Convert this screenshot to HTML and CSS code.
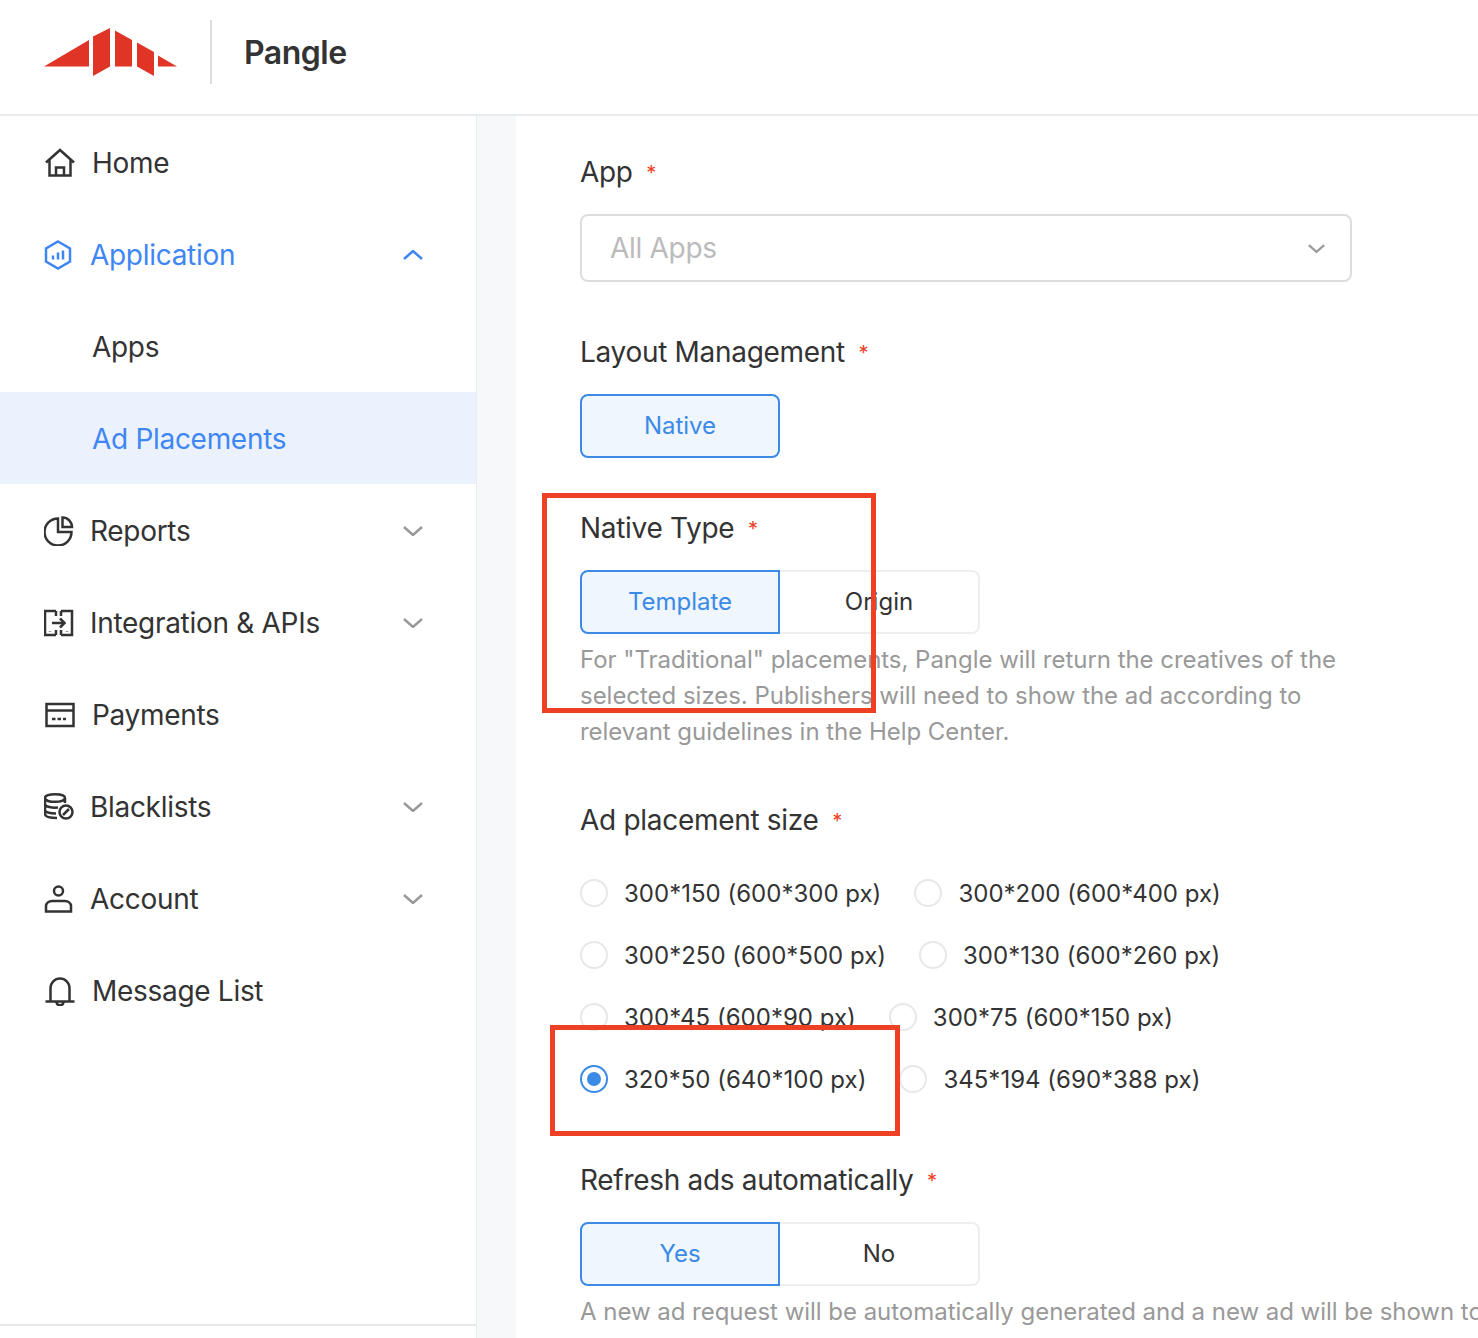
FILE: index.html
```html
<!DOCTYPE html>
<html lang="en">
<head>
    <meta charset="UTF-8">
    <meta name="viewport" content="width=device-width, initial-scale=1.0">
    <title>Pangle</title>
    <link rel="stylesheet" href="styles.css">
</head>
<body>
    <header class="topbar">
        <svg class="logo" width="134" height="48" viewBox="44 28 134 48">
            <polygon points="44,66.5 89,40 89,66.5"/>
            <polygon points="93,36.5 110,28 110,66.5 93,76"/>
            <polygon points="115,30.5 132,40 132,66.5 115,66.5"/>
            <polygon points="137,42.5 154,52 154,76 137,66.5"/>
            <polygon points="158,55.5 177,66.5 158,66.5"/>
        </svg>
        <div class="topbar-divider"></div>
        <div class="brand">Pangle</div>
    </header>

    <div class="layout">
        <nav class="sidebar">
            <a class="nav-item">
                <svg class="nav-icon" viewBox="0 0 30 30"><path d="M1 14.500 15 2l14 12.500M4.500 11.500V27.500h21V11.500M11 27.500V19.500h8v8"/></svg>
                <span>Home</span>
            </a>
            <a class="nav-item group open">
                <svg class="nav-icon" viewBox="0 0 30 30"><path d="M14 1.500 26 8.500v13l-12 7-12-7v-13zM9 15.500v4M14 12.500v7M19 10.500v9"/></svg>
                <span>Application</span>
                <svg class="chevron" viewBox="0 0 20 10"><path d="M1 9 10 1l9 8"/></svg>
            </a>
            <a class="nav-item">
                <span class="nav-spacer"></span>
                <span>Apps</span>
            </a>
            <a class="nav-item active">
                <span class="nav-spacer"></span>
                <span>Ad Placements</span>
            </a>
            <a class="nav-item group">
                <svg class="nav-icon" viewBox="1 0 30 30"><path d="M15 2.500A13.500 13.500 0 1 0 28.500 16H15zM19.500 1.500A9.500 9.500 0 0 1 29 11H19.500z"/></svg>
                <span>Reports</span>
                <svg class="chevron" viewBox="0 0 20 10"><path d="M1 1l9 8 9-8"/></svg>
            </a>
            <a class="nav-item group">
                <svg class="nav-icon" viewBox="1 0 30 30"><path d="M13 3H2v24h11M18 3h11v24H18M13 3v5M18 3v5M13 22v5M18 22v5M9 15h12M17 10.500l4.500 4.500-4.500 4.500M7 23v.5M24 23v.5"/></svg>
                <span>Integration &amp; APIs</span>
                <svg class="chevron" viewBox="0 0 20 10"><path d="M1 1l9 8 9-8"/></svg>
            </a>
            <a class="nav-item">
                <svg class="nav-icon" viewBox="0 0 30 30"><path d="M1.500 4h27v22h-27zM1.500 10.500h27M7 19h3.500M12.500 19h3.500M18 19h3"/></svg>
                <span>Payments</span>
            </a>
            <a class="nav-item group">
                <svg class="nav-icon" viewBox="1 0 30 30"><path d="M2 6c0-5 20-5 20 0s-20 5-20 0zM2 6v16c0 3 6 4 12 4M22 6v5M2 12c0 3 7 4 13 3.500M2 18c0 2.500 6 3.500 11 3.500"/><circle cx="23" cy="20" r="6.500"/><path d="M20 23l6-6"/></svg>
                <span>Blacklists</span>
                <svg class="chevron" viewBox="0 0 20 10"><path d="M1 1l9 8 9-8"/></svg>
            </a>
            <a class="nav-item group">
                <svg class="nav-icon" viewBox="0 0 30 30"><circle cx="14.500" cy="7" r="4.500"/><path d="M2 27.500V22c0-3 3-5 6-5h13c3 0 6 2 6 5v5.500z"/></svg>
                <span>Account</span>
                <svg class="chevron" viewBox="0 0 20 10"><path d="M1 1l9 8 9-8"/></svg>
            </a>
            <a class="nav-item">
                <svg class="nav-icon" viewBox="0 0 30 30"><path d="M0.500 25.500h29M5.500 25.500V12a9.500 9.500 0 0 1 19 0v13.500M11.500 26.500c.5 3.500 6.500 3.500 7 0"/></svg>
                <span>Message List</span>
            </a>
            <div class="sidebar-foot"></div>
        </nav>

        <div class="gutter"></div>

        <main class="content">
            <div class="field">
                <label class="field-label">App <span class="req">*</span></label>
                <div class="select">
                    <span>All Apps</span>
                    <svg class="chevron" viewBox="0 0 20 10"><path d="M1 1l9 8 9-8"/></svg>
                </div>
            </div>

            <div class="field">
                <label class="field-label">Layout Management <span class="req">*</span></label>
                <div class="btn-group">
                    <div class="btn selected single">Native</div>
                </div>
            </div>

            <div class="field">
                <label class="field-label">Native Type <span class="req">*</span></label>
                <div class="btn-group">
                    <div class="btn selected">Template</div>
                    <div class="btn">Origin</div>
                </div>
                <p class="help">For "Traditional" placements, Pangle will return the creatives of the selected sizes. Publishers will need to show the ad according to relevant guidelines in the Help Center.</p>
            </div>

            <div class="field">
                <label class="field-label">Ad placement size <span class="req">*</span></label>
                <div class="radio-list">
                    <div class="radio-row">
                        <div class="radio"><i></i>300*150 (600*300 px)</div>
                        <div class="radio"><i></i>300*200 (600*400 px)</div>
                    </div>
                    <div class="radio-row">
                        <div class="radio"><i></i>300*250 (600*500 px)</div>
                        <div class="radio"><i></i>300*130 (600*260 px)</div>
                    </div>
                    <div class="radio-row">
                        <div class="radio"><i></i>300*45 (600*90 px)</div>
                        <div class="radio"><i></i>300*75 (600*150 px)</div>
                    </div>
                    <div class="radio-row">
                        <div class="radio checked"><i></i>320*50 (640*100 px)</div>
                        <div class="radio"><i></i>345*194 (690*388 px)</div>
                    </div>
                </div>
            </div>

            <div class="field">
                <label class="field-label">Refresh ads automatically <span class="req">*</span></label>
                <div class="btn-group">
                    <div class="btn selected">Yes</div>
                    <div class="btn">No</div>
                </div>
                <p class="help nowrap">A new ad request will be automatically generated and a new ad will be shown to</p>
            </div>
        </main>
    </div>

    <!-- red boxes drawn on top of the screenshot -->
    <div class="mark mark-type"></div>
    <div class="mark mark-size"></div>
</body>
</html>
```

FILE: styles.css
```css
* {
    box-sizing: border-box;
}
html, body {
    height: 100%;
}
body {
    position: relative;
    margin: 0;
    overflow: hidden;
    font-family: Inter, "Liberation Sans", sans-serif;
    font-size: 28px;
    letter-spacing: -0.3px;
    color: #333;
    background: #fff;
}
.topbar {
    display: flex;
    align-items: center;
    height: 116px;
    padding: 0 0 10px 44px;
    border-bottom: 2px solid #e8ebf0;
}
.logo {
    fill: #e03426;
}
.topbar-divider {
    width: 2px;
    height: 64px;
    margin: 0 32px;
    background: #ddd;
}
.brand {
    font-size: 32px;
    font-weight: 600;
    letter-spacing: -0.5px;
}
.layout {
    display: flex;
    height: 1222px;
}
.sidebar {
    position: relative;
    flex: none;
    width: 477px;
    border-right: 1px solid #e8ebf0;
}
.nav-item {
    display: flex;
    align-items: center;
    gap: 17px;
    height: 92px;
    padding: 1px 53px 0 45px;
}
.nav-item.group {
    gap: 16px;
    padding-left: 44px;
}
.nav-item.open {
    color: #3f86f5;
}
.nav-item.active {
    color: #3f86f5;
    background: #ebf2fd;
}
.nav-icon {
    flex: none;
    width: 30px;
    height: 30px;
    fill: none;
    stroke: currentColor;
    stroke-width: 2.5;
}
.nav-spacer {
    width: 30px;
}
.chevron {
    flex: none;
    width: 20px;
    height: 10px;
    margin-left: auto;
    fill: none;
    stroke: #999;
    stroke-width: 2.5;
}
.nav-item.open .chevron {
    stroke: #3f86f5;
}
.sidebar-foot {
    position: absolute;
    left: 0;
    right: 0;
    bottom: 12px;
    height: 2px;
    background: #e8e8e8;
}
.gutter {
    flex: none;
    width: 39px;
    background: #f7f8fa;
}
.content {
    flex: 1;
    min-width: 0;
    padding: 36px 0 0 64px;
}
.field {
    margin-bottom: 50px;
}
.field-label {
    display: block;
    height: 40px;
    margin-bottom: 22px;
    line-height: 40px;
}
.req {
    margin-left: 6px;
    font-size: 20px;
    vertical-align: 2px;
    color: #ee4025;
}
.select {
    display: flex;
    align-items: center;
    width: 772px;
    height: 68px;
    padding: 0 25px 0 28px;
    border: 2px solid #ddd;
    border-radius: 8px;
    color: #bbb;
}
.select .chevron {
    width: 17px;
    height: 9px;
}
.btn-group {
    display: flex;
}
.btn {
    width: 200px;
    height: 64px;
    border: 2px solid #eee;
    border-left: 0;
    border-radius: 0 8px 8px 0;
    font-size: 24px;
    letter-spacing: 0;
    line-height: 60px;
    text-align: center;
}
.btn.selected {
    border: 2px solid #3b8ae6;
    border-radius: 8px 0 0 8px;
    color: #3b8ae6;
    background: #eff6fe;
}
.btn.single {
    border-radius: 8px;
}
.help {
    width: 772px;
    margin: 8px 0 0;
    font-size: 24px;
    letter-spacing: -0.03px;
    line-height: 36px;
    color: #999;
}
.help.nowrap {
    width: auto;
    white-space: nowrap;
}
.radio-row {
    display: flex;
    gap: 33px;
    height: 62px;
}
.radio {
    display: flex;
    align-items: center;
    gap: 16px;
    font-size: 24px;
    /* non-zero so the asterisk stays raised, not turned into a times sign */
    letter-spacing: 0.01px;
}
.radio i {
    display: flex;
    align-items: center;
    justify-content: center;
    width: 28px;
    height: 28px;
    border: 2px solid #e8e8e8;
    border-radius: 50%;
}
.radio.checked i {
    border-color: #3b8ae6;
}
.radio.checked i::after {
    content: "";
    width: 14px;
    height: 14px;
    border-radius: 50%;
    background: #3b8ae6;
}
.mark {
    position: absolute;
    border: 5px solid #ee4025;
}
.mark-type {
    left: 542px;
    top: 493px;
    width: 334px;
    height: 220px;
}
.mark-size {
    left: 550px;
    top: 1025px;
    width: 350px;
    height: 111px;
}
```
